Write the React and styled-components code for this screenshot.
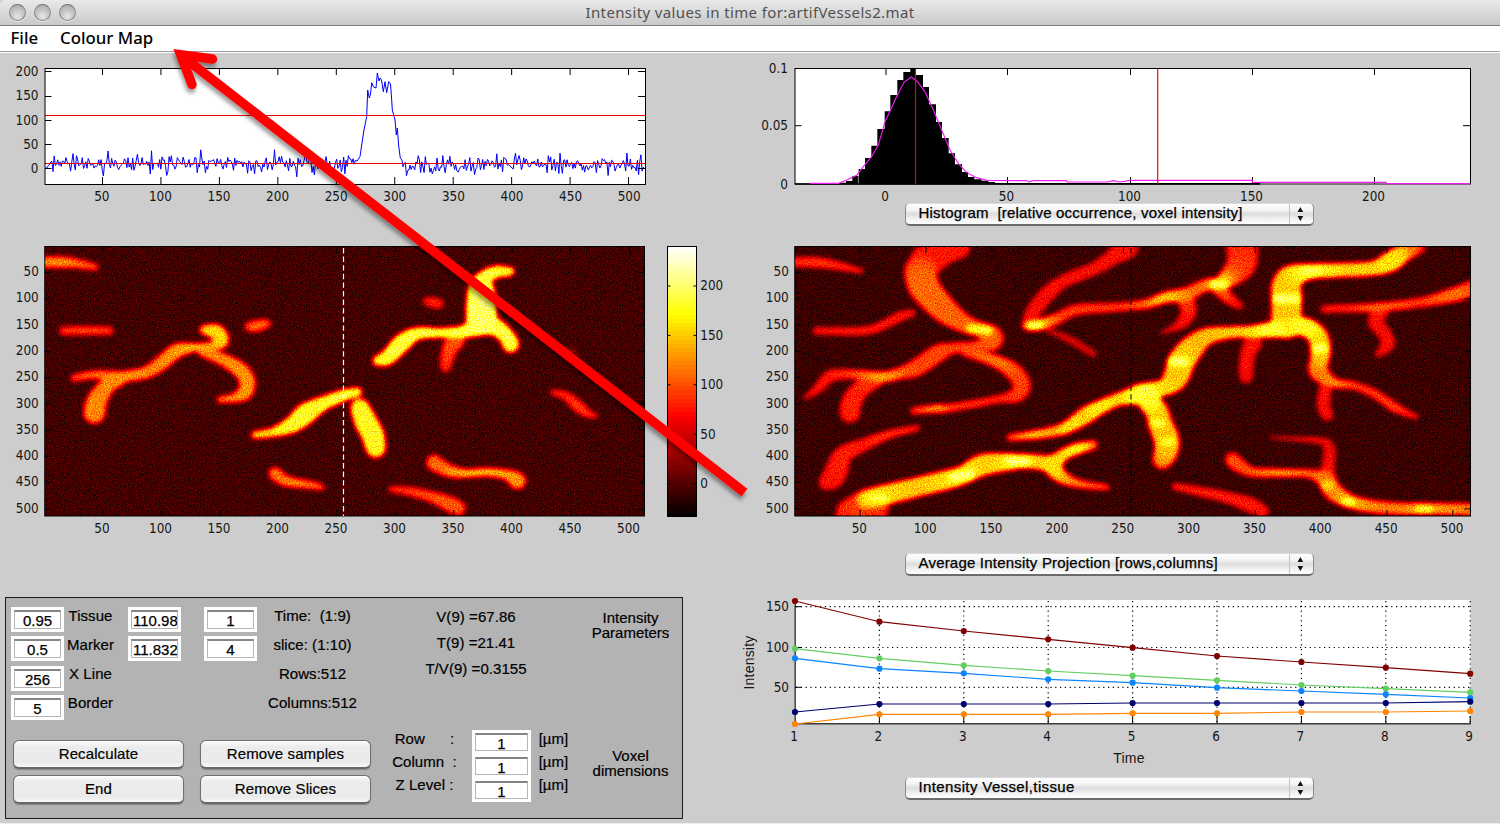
import React from 'react';
import styled, { createGlobalStyle } from 'styled-components';

const GlobalStyle = createGlobalStyle`
  * { box-sizing: border-box; }
  body { margin: 0; background: #cdcdcd; overflow: hidden; }
`;

const UI_FONT = '"Liberation Sans", Arial, sans-serif';
const MAC_FONT = '"Noto Sans", "Open Sans", sans-serif';

/* ---------- window chrome ---------- */

const Window = styled.div`
  position: relative;
  display: flex;
  flex-direction: column;
  width: 1500px;
  height: 824px;
  background: #cdcdcd;
  border-bottom: 1px solid #ececec;
  font-family: ${UI_FONT};
  color: #000;
  overflow: hidden;
`;

const TitleBar = styled.header`
  display: grid;
  grid-template-columns: 1fr auto 1fr;
  align-items: center;
  height: 26px;
  background: linear-gradient(#e9e9e9, #c9c9c9);
  border-bottom: 1px solid #7d7d7d;
  border-radius: 5px 0 0 0;
`;

const Lights = styled.div`
  display: flex;
  gap: 8px;
  padding-left: 9px;
`;

const Light = styled.span`
  width: 17px;
  height: 17px;
  border-radius: 50%;
  border: 1px solid #8b8b8b;
  border-top-color: #747474;
  background: radial-gradient(circle at 50% 75%, #e6e6e6 0, #c6c6c6 45%, #a2a2a2 100%);
  box-shadow: 0 1px 0 rgba(255, 255, 255, 0.6);
`;

const Title = styled.h1`
  margin: 0;
  font: 400 15px ${MAC_FONT};
  line-height: 25px;
  letter-spacing: 0.37px;
  color: #505050;
  white-space: pre;
`;

const MenuBar = styled.nav`
  display: flex;
  gap: 22px;
  align-items: center;
  height: 27px;
  padding: 0 0 3px 10.5px;
  background: #fff;
  border-bottom: 1px solid #fff;
  box-shadow: inset 0 -1px 0 #9c9c9c;
`;

const MenuItem = styled.span`
  font: 500 16.8px ${MAC_FONT};
  line-height: 23px;
  white-space: nowrap;
`;

const Body = styled.main`
  display: grid;
  grid-template-columns: 750px 750px;
`;

const Column = styled.section`
  display: flex;
  flex-direction: column;
  align-items: flex-start;
`;

const Plot = styled.svg`
  display: block;
  flex: none;
  overflow: visible;
`;

const Tick = styled.text`
  font: 400 13.4px "DejaVu Sans Condensed", "DejaVu Sans", sans-serif;
  font-stretch: condensed;
  fill: #151515;
`;

const AxisTitle = styled.text`
  font: 400 14px ${UI_FONT};
  letter-spacing: 0.2px;
  fill: #151515;
  text-anchor: middle;
`;

/* ---------- pop-up menus ---------- */

const Popup = styled.div`
  display: grid;
  grid-template-columns: 1fr 24px;
  align-items: center;
  width: 409px;
  height: 23px;
  margin-left: 155px;
  flex: none;
  padding-left: 12.5px;
  border: 1px solid #8c8c8c;
  border-top-color: #d9d9d9;
  border-bottom: 2px solid #6b6b6b;
  border-radius: 5px;
  background: linear-gradient(#fff 0, #f4f4f4 30%, #dcdcdc 50%, #f1f1f1 75%, #fff 100%);
`;

const PopupText = styled.span`
  padding-bottom: 2px;
  font-size: 15px;
  line-height: 18px;
  letter-spacing: ${(p) => p.$track || 0.2}px;
  -webkit-text-stroke: 0.25px #000;
  white-space: pre;
`;

const PopupArrows = styled.svg`
  height: 20px;
  width: 24px;
  border-left: 1px solid #c4c4c4;
`;

function PopupMenu({ children, track }) {
  return (
    <Popup>
      <PopupText $track={track}>{children}</PopupText>
      <PopupArrows viewBox="0 0 24 20">
        <path d="M7.8 8 10.8 2.6 13.8 8zM7.8 12 10.8 17.4 13.8 12z" fill="#111" />
      </PopupArrows>
    </Popup>
  );
}

/* ---------- parameter panel ---------- */

const Panel = styled.div`
  display: flex;
  flex-direction: column;
  width: 678px;
  height: 222px;
  margin-left: 5px;
  background: #b3b3b3;
  border: 1px solid #1a1a1a;
  font-size: 15px;
`;

const PanelRow = styled.div`
  display: flex;
  align-items: flex-start;
  height: ${(p) => p.$h}px;
`;

const Stack = styled.div`
  display: flex;
  flex-direction: column;
  flex: none;
  align-items: center;
  width: ${(p) => p.$w}px;
  padding-top: ${(p) => p.$top || 0}px;
  margin-left: ${(p) => p.$left || 0}px;
  gap: ${(p) => p.$gap || 0}px;
`;

const Field = styled.div`
  width: ${(p) => p.$w || 53}px;
  height: ${(p) => p.$h || 25}px;
  padding: 3px;
  background: #fff;
`;

const FieldInner = styled.div`
  height: 100%;
  overflow: hidden;
  border: 1px solid #b5b5b5;
  border-top: 2px solid #858585;
  text-align: ${(p) => (p.$clip ? 'left' : 'center')};
  padding: 0 0 0 ${(p) => (p.$clip ? 1 : 0)}px;
  font-size: 15px;
  line-height: 17px;
  white-space: nowrap;
  -webkit-text-stroke: 0.25px #000;
`;

const Label = styled.span`
  height: ${(p) => p.$h || 29.1}px;
  line-height: 17px;
  letter-spacing: 0.05px;
  white-space: pre;
  -webkit-text-stroke: 0.2px #000;
`;

const Heading = styled.div`
  text-align: center;
  line-height: 15px;
  white-space: pre;
  -webkit-text-stroke: 0.2px #000;
`;

const Button = styled.button`
  width: 171px;
  height: 29px;
  padding: 0 0 2px;
  border: 1px solid #6f6f6f;
  border-bottom: 2px solid #686868;
  border-radius: 6px;
  background: linear-gradient(#fdfdfd 0, #ececec 22%, #eaeaea 80%, #f8f8f8 100%);
  box-shadow: 0 1px 1px rgba(0, 0, 0, 0.25);
  font: 400 15px ${UI_FONT};
  letter-spacing: 0.1px;
  -webkit-text-stroke: 0.2px #000;
  color: #000;
`;

const Overlay = styled.svg`
  position: absolute;
  inset: 0;
  pointer-events: none;
`;

function Entry({ children, clip, w, h }) {
  return (
    <Field $w={w} $h={h}>
      <FieldInner $clip={clip}>{children}</FieldInner>
    </Field>
  );
}

/* ---------- data ---------- */

function seeded(seed) {
  let s = seed;
  return () => {
    s = (s * 1664525 + 1013904223) % 4294967296;
    return s / 4294967296;
  };
}

const PEAK = [
  [357, 161], [360, 156.7], [361.5, 146], [364, 130], [366.7, 116.7], [367.7, 90], [369.3, 98], [370.5, 94],
  [371.7, 82.7], [373.5, 87], [376, 88], [377.3, 73], [379, 81], [380, 78], [381.5, 80], [383.3, 91.7],
  [385, 81.7], [386.7, 92.7], [388.7, 81.7], [390.5, 84], [391.5, 97], [392.3, 110], [395, 120], [396.3, 135],
  [397.3, 128], [398.7, 146], [400.3, 158], [402, 160],
];

const SIGNAL = (() => {
  const rnd = seeded(77);
  const pts = [];
  const noise = (from, to) => {
    for (let x = from; x < to; x += 1.172) {
      const g = (rnd() + rnd() + rnd() + rnd() - 2) / 0.58;
      pts.push([x, Math.min(183, 164.5 - g * 4.8)]);
    }
  };
  noise(46, 356);
  pts.push(...PEAK);
  noise(403, 645);
  return pts.map(([x, y]) => `${x.toFixed(1)},${y.toFixed(1)}`).join(' ');
})();

/* left edge and top of each histogram bar, in thirds of a pixel */
const BARS = [
  [240, 398], [258, 393], [277, 378], [296, 357], [315, 324], [334, 287], [352, 237], [374, 184], [391, 135],
  [412, 90], [430, 66], [451, 56], [467, 75], [489, 111], [507, 163], [528, 216], [546, 264], [566, 310],
  [585, 343], [606, 366], [624, 381], [643, 388], [665, 392], [685, 396], [705, 399],
];
const HIST_PATH =
  'M105 404V400H240' + BARS.map(([x, y]) => `H${x}V${y}`).join('') + 'H1500V404Z';
const FIT = [
  [150, 400], [235, 400], [260, 390], [290, 376], [310, 350], [335, 320], [355, 285], [375, 215], [410, 140],
  [432, 97], [454, 81], [470, 93], [495, 125], [520, 180], [545, 240], [570, 300], [595, 340], [620, 368],
  [650, 383], [680, 391], [800, 392], [805, 396], [820, 392], [920, 392], [922, 396], [1040, 396], [1060, 392],
  [1080, 396], [1110, 391], [1477, 391], [1477, 397], [1878, 397], [1880, 401], [2130, 401],
].map((p) => p.join(',')).join(' ');

const SERIES = [
  { color: '#800000', y: [183, 245, 273, 298, 323, 348, 366, 383, 401] },
  { color: '#62cf62', y: [326, 355, 376, 393, 407, 421, 435, 446, 457] },
  { color: '#0a84ff', y: [355, 386, 400, 418, 428, 443, 453, 463, 474] },
  { color: '#00006e', y: [516, 492, 492, 492, 489, 489, 489, 489, 485] },
  { color: '#ff8400', y: [552, 523, 523, 523, 520, 520, 516, 516, 513] },
];

/* vessel centre lines: x, y, diameter (thirds of a pixel) and level */
const SLICE_VESSELS = [
  [[125, 82, 32, 0.58], [180, 82, 34, 0.6], [230, 86, 28, 0.55], [285, 97, 20, 0.48]],
  [[190, 288, 24, 0.48], [260, 287, 26, 0.5], [328, 288, 24, 0.46]],
  [[748, 276, 26, 0.48], [772, 273, 36, 0.56], [800, 266, 24, 0.46]],
  [[222, 430, 20, 0.5], [280, 420, 24, 0.56], [370, 424, 32, 0.62], [440, 412, 36, 0.6], [490, 380, 44, 0.6],
    [530, 348, 44, 0.62], [580, 338, 24, 0.68], [635, 333, 24, 0.62], [664, 318, 46, 0.66], [650, 292, 46, 0.74],
    [612, 285, 26, 0.6]],
  [[370, 428, 34, 0.62], [320, 455, 48, 0.6], [290, 500, 62, 0.6], [283, 534, 66, 0.6]],
  [[605, 350, 26, 0.6], [670, 375, 38, 0.6], [720, 405, 46, 0.62], [742, 440, 48, 0.62], [735, 472, 46, 0.62],
    [705, 488, 26, 0.6], [662, 494, 20, 0.55]],
  [[765, 600, 22, 0.68], [820, 592, 26, 0.76], [880, 567, 50, 0.8], [915, 538, 64, 0.8], [965, 508, 42, 0.8],
    [1030, 482, 34, 0.84], [1072, 472, 28, 0.78]],
  [[1080, 520, 56, 0.78], [1097, 560, 68, 0.8], [1118, 600, 68, 0.8], [1127, 638, 60, 0.76]],
  [[825, 716, 40, 0.57], [850, 735, 34, 0.56], [880, 743, 28, 0.6], [930, 750, 24, 0.56], [965, 757, 16, 0.5]],
  [[1132, 378, 26, 0.78], [1165, 366, 46, 0.82], [1205, 325, 54, 0.83], [1250, 297, 36, 0.84],
    [1320, 294, 28, 0.84], [1390, 290, 34, 0.86], [1440, 272, 62, 0.86], [1485, 276, 52, 0.84],
    [1520, 305, 46, 0.83], [1532, 328, 52, 0.79]],
  [[1530, 110, 26, 0.78], [1485, 112, 38, 0.82], [1448, 135, 44, 0.84], [1443, 170, 80, 0.83],
    [1443, 200, 86, 0.85], [1445, 250, 94, 0.87]],
  [[1368, 315, 56, 0.52], [1350, 340, 46, 0.5], [1340, 375, 38, 0.46], [1337, 394, 34, 0.44]],
  [[1280, 200, 20, 0.4], [1300, 203, 32, 0.46], [1316, 206, 28, 0.43]],
  [[1658, 472, 14, 0.44], [1700, 485, 26, 0.46], [1735, 515, 36, 0.48], [1765, 537, 22, 0.46], [1787, 543, 12, 0.44]],
  [[1302, 683, 48, 0.56], [1340, 705, 38, 0.56], [1390, 715, 26, 0.66], [1460, 712, 24, 0.68],
    [1520, 720, 30, 0.62], [1553, 738, 52, 0.62]],
  [[1173, 763, 16, 0.46], [1230, 770, 26, 0.49], [1300, 788, 34, 0.51], [1350, 808, 46, 0.53], [1373, 820, 46, 0.52]],
  [[1705, 345, 14, 0.26], [1725, 352, 14, 0.26]],
];

const PROJECTION_VESSELS = [
  [[125, 82, 28, 0.48], [200, 83, 32, 0.51], [260, 92, 26, 0.49], [333, 109, 14, 0.46]],
  [[635, 42, 48, 0.46], [580, 50, 80, 0.46], [528, 80, 100, 0.46]],
  [[512, 110, 100, 0.5], [522, 155, 92, 0.59], [580, 222, 78, 0.58], [640, 264, 54, 0.58], [692, 285, 44, 0.58]],
  [[660, 280, 22, 0.86], [715, 287, 26, 0.87]],
  [[692, 285, 46, 0.6], [728, 302, 58, 0.56], [728, 322, 50, 0.56], [680, 333, 28, 0.55], [600, 342, 34, 0.53],
    [560, 358, 54, 0.54], [500, 398, 52, 0.53], [450, 415, 34, 0.56], [400, 426, 32, 0.68], [300, 418, 28, 0.5],
    [240, 424, 36, 0.46], [205, 460, 28, 0.46], [165, 489, 10, 0.38]],
  [[385, 432, 40, 0.52], [335, 460, 52, 0.48], [305, 500, 60, 0.48], [300, 533, 62, 0.47]],
  [[198, 288, 22, 0.45], [340, 288, 26, 0.47], [400, 270, 26, 0.47], [450, 245, 30, 0.46], [485, 235, 22, 0.45]],
  [[645, 352, 24, 0.52], [730, 376, 36, 0.61], [790, 410, 50, 0.53], [815, 450, 54, 0.53], [800, 480, 42, 0.5],
    [740, 494, 22, 0.5], [600, 519, 24, 0.52], [560, 521, 26, 0.64], [490, 528, 20, 0.47]],
  [[500, 580, 18, 0.46], [420, 598, 24, 0.51], [340, 630, 38, 0.46], [280, 660, 52, 0.48], [262, 700, 68, 0.46],
    [250, 726, 68, 0.45], [225, 745, 32, 0.44]],
  [[300, 836, 86, 0.47], [345, 806, 80, 0.52], [375, 800, 80, 0.5], [385, 834, 50, 0.45]],
  [[345, 795, 50, 0.72], [390, 784, 62, 0.76], [500, 757, 58, 0.72], [590, 735, 58, 0.76], [640, 720, 54, 0.8],
    [700, 690, 66, 0.71], [800, 680, 46, 0.8], [850, 680, 42, 0.74], [905, 685, 50, 0.76], [940, 660, 34, 0.74],
    [980, 642, 34, 0.82], [1030, 630, 26, 0.54]],
  [[610, 728, 26, 0.94], [660, 718, 26, 0.94]],
  [[775, 678, 24, 0.94], [830, 680, 24, 0.92]],
  [[360, 788, 24, 0.85], [400, 790, 30, 0.88]],
  [[905, 690, 58, 0.78], [930, 722, 40, 0.68], [980, 745, 26, 0.6], [1070, 758, 16, 0.54]],
  [[780, 608, 20, 0.5], [850, 600, 26, 0.72], [920, 588, 32, 0.66], [960, 572, 38, 0.78], [1010, 540, 52, 0.7],
    [1045, 520, 42, 0.8], [1100, 495, 38, 0.72], [1140, 485, 46, 0.78], [1180, 478, 66, 0.87], [1200, 490, 66, 0.82]],
  [[1195, 500, 62, 0.8], [1220, 530, 68, 0.7], [1230, 565, 72, 0.72], [1250, 615, 76, 0.73], [1248, 650, 70, 0.66],
    [1236, 674, 56, 0.52]],
  [[1213, 565, 20, 0.9], [1236, 565, 20, 0.9]],
  [[1240, 620, 18, 0.87], [1268, 620, 18, 0.87]],
  [[1190, 470, 52, 0.82], [1250, 455, 48, 0.74], [1278, 425, 76, 0.71], [1295, 380, 82, 0.74], [1325, 340, 72, 0.7],
    [1370, 305, 50, 0.71], [1440, 293, 34, 0.74], [1510, 290, 36, 0.77], [1560, 285, 46, 0.87], [1610, 280, 54, 0.76],
    [1660, 275, 54, 0.84], [1700, 300, 60, 0.72], [1712, 340, 62, 0.74], [1708, 380, 56, 0.64], [1705, 408, 58, 0.58],
    [1750, 443, 28, 0.64], [1810, 452, 24, 0.51], [1870, 475, 26, 0.52], [1930, 515, 30, 0.52], [1970, 535, 20, 0.48],
    [2000, 546, 12, 0.46]],
  [[1265, 380, 28, 0.91], [1305, 380, 28, 0.92]],
  [[1700, 340, 30, 0.9], [1718, 340, 30, 0.9]],
  [[1608, 265, 92, 0.74], [1610, 225, 90, 0.71], [1610, 190, 92, 0.74], [1610, 150, 88, 0.7], [1628, 125, 68, 0.73],
    [1680, 110, 44, 0.84], [1770, 106, 42, 0.75], [1870, 100, 42, 0.75], [1925, 78, 62, 0.78], [1965, 52, 52, 0.6],
    [2012, 40, 24, 0.45]],
  [[1580, 192, 26, 0.93], [1640, 192, 26, 0.93]],
  [[1665, 110, 22, 0.9], [1705, 108, 22, 0.9]],
  [[1510, 325, 54, 0.45], [1495, 350, 44, 0.45], [1488, 400, 44, 0.44], [1488, 426, 38, 0.43]],
  [[1727, 455, 38, 0.45], [1720, 510, 40, 0.44], [1732, 540, 36, 0.42]],
  [[1475, 30, 96, 0.44], [1475, 85, 88, 0.49], [1440, 125, 60, 0.54], [1410, 145, 38, 0.76], [1365, 152, 36, 0.57],
    [1310, 178, 42, 0.6], [1245, 188, 32, 0.74], [1190, 207, 28, 0.58], [1110, 216, 26, 0.51], [980, 225, 32, 0.52],
    [920, 252, 34, 0.52], [865, 270, 34, 0.72], [832, 272, 30, 0.62]],
  [[1393, 148, 22, 0.92], [1425, 150, 22, 0.92]],
  [[842, 272, 20, 0.92], [870, 271, 20, 0.92]],
  [[1405, 160, 44, 0.56], [1440, 193, 32, 0.47], [1468, 213, 18, 0.45]],
  [[1305, 190, 50, 0.51], [1316, 225, 48, 0.45], [1303, 257, 38, 0.44], [1270, 280, 18, 0.42], [1235, 292, 8, 0.4]],
  [[1130, 40, 72, 0.44], [1100, 58, 50, 0.45], [1040, 98, 38, 0.45], [940, 140, 38, 0.45], [890, 180, 46, 0.44],
    [850, 230, 46, 0.44], [836, 268, 38, 0.44]],
  [[890, 285, 14, 0.34], [960, 315, 22, 0.39], [1030, 357, 20, 0.4]],
  [[1723, 222, 22, 0.46], [1810, 220, 24, 0.5], [1885, 217, 26, 0.59], [2010, 203, 28, 0.51], [2110, 180, 42, 0.6],
    [2170, 160, 50, 0.47]],
  [[1893, 230, 44, 0.46], [1875, 260, 44, 0.43], [1903, 295, 40, 0.44], [1913, 328, 42, 0.44], [1885, 358, 16, 0.4]],
  [[1560, 608, 6, 0.4], [1630, 612, 12, 0.44], [1720, 620, 20, 0.42], [1738, 642, 36, 0.41], [1735, 690, 38, 0.43],
    [1732, 730, 50, 0.46]],
  [[1447, 675, 44, 0.55], [1465, 690, 42, 0.55], [1510, 712, 28, 0.55], [1590, 714, 24, 0.67], [1680, 717, 24, 0.56],
    [1730, 738, 52, 0.61], [1748, 768, 56, 0.58], [1800, 800, 40, 0.7], [1870, 815, 38, 0.62], [1960, 822, 36, 0.62],
    [2020, 822, 36, 0.68], [2170, 824, 36, 0.6]],
  [[1725, 752, 30, 0.76], [1738, 752, 30, 0.76]],
  [[1785, 800, 20, 0.9], [1805, 801, 20, 0.9]],
  [[2005, 822, 18, 0.88], [2040, 822, 18, 0.86]],
  [[1275, 755, 20, 0.46], [1360, 772, 28, 0.48], [1440, 790, 34, 0.47], [1500, 810, 46, 0.46], [1538, 830, 36, 0.45]],
];

/* Catmull-Rom interpolation of each centre line into short strokes, dimmest first */
function toStrokes(vessels, dim) {
  const out = [];
  vessels.forEach((v) => {
    for (let i = 0; i < v.length - 1; i += 1) {
      const p0 = v[Math.max(0, i - 1)];
      const p1 = v[i];
      const p2 = v[i + 1];
      const p3 = v[Math.min(v.length - 1, i + 2)];
      const n = Math.max(2, Math.round(Math.hypot(p2[0] - p1[0], p2[1] - p1[1]) / 10));
      const at = (t) =>
        p1.map((_, k) => {
          if (k > 1) return p1[k] + (p2[k] - p1[k]) * t;
          return 0.5 * (2 * p1[k] + (p2[k] - p0[k]) * t + (2 * p0[k] - 5 * p1[k] + 4 * p2[k] - p3[k]) * t * t
            + (3 * p1[k] - p0[k] - 3 * p2[k] + p3[k]) * t * t * t);
        });
      for (let s = 0; s < n; s += 1) {
        const a = at(s / n);
        const b = at((s + 1) / n);
        out.push({ a, b, w: (a[2] + b[2]) / 2, level: (a[3] + b[3]) / 2 - dim });
      }
    }
  });
  return out.sort((m, n) => m.level - n.level);
}

const SLICE_STROKES = toStrokes(SLICE_VESSELS, 0.03);
const PROJECTION_STROKES = toStrokes(PROJECTION_VESSELS, 0.065);

const hot = (t) => {
  const c = (v) => Math.round(255 * Math.max(0, Math.min(1, v)));
  return `rgb(${c(t / 0.375)},${c((t - 0.375) / 0.375)},${c((t - 0.75) / 0.25)})`;
};

/* ---------- plots ---------- */

const range = (n) => Array.from({ length: n }, (_, i) => i);

function HeatMap({ id, x, width, strokes, base, seed }) {
  const w3 = width * 3;
  return (
    <svg x={x} y="246.5" width={width} height="269.5" viewBox={`134 35 ${w3} 808.5`}>
      <defs>
        <filter id={id} filterUnits="userSpaceOnUse" x="134" y="35" width={w3} height="809" colorInterpolationFilters="sRGB">
          <feGaussianBlur in="SourceGraphic" stdDeviation="7" result="soft" />
          <feTurbulence type="fractalNoise" baseFrequency="0.27" numOctaves="2" seed={seed} />
          <feColorMatrix values="1 0 0 0 0  1 0 0 0 0  1 0 0 0 0  0 0 0 0 1" result="grain" />
          <feComposite in="soft" in2="grain" operator="arithmetic" k1="0.24" k2="0.88" k3="0.26" k4="-0.13" />
          <feComponentTransfer>
            <feFuncR type="table" tableValues="0 .333 .667 1 1 1 1 1 1" />
            <feFuncG type="table" tableValues="0 0 0 0 .333 .667 1 1 1" />
            <feFuncB type="table" tableValues="0 0 0 0 0 0 0 .5 1" />
            <feFuncA type="linear" slope="0" intercept="1" />
          </feComponentTransfer>
        </filter>
      </defs>
      <g filter={`url(#${id})`}>
        <rect x="80" y="-20" width={w3 + 120} height="940" fill={`rgb(${base},${base},${base})`} />
        {strokes.map((s, i) => {
          const g = Math.round(s.level * 255);
          return (
            <line key={i} x1={s.a[0]} y1={s.a[1]} x2={s.b[0]} y2={s.b[1]}
              stroke={`rgb(${g},${g},${g})`} strokeWidth={s.w} strokeLinecap="round" />
          );
        })}
      </g>
    </svg>
  );
}

function MapAxes({ x0, x1, step }) {
  return (
    <g>
      <path stroke="#000" fill="none"
        d={range(10).map((i) => {
          const x = x0 - 0.5 + step * (i + 1);
          const y = 246.2 + 26.27 * (i + 1);
          return `M${x} 247v6M${x} 516v-6M${x0} ${y}h6M${x1} ${y}h-6`;
        }).join('')} />
      <rect x={x0} y="246.5" width={x1 - x0} height="269.5" fill="none" stroke="#000" />
      {range(10).map((i) => (
        <g key={i}>
          <Tick x={x0 - 1.3 + step * (i + 1)} y="532.5" textAnchor="middle">{50 * (i + 1)}</Tick>
          <Tick x={x0 - 6} y={276.2 + 26.27 * i} textAnchor="end">{50 * (i + 1)}</Tick>
        </g>
      ))}
    </g>
  );
}

function IntensityProfile() {
  return (
    <Plot width="750" height="173" viewBox="0 53 750 173">
      <rect x="45" y="68.5" width="600.5" height="116" fill="#fff" />
      <polyline points={SIGNAL} fill="none" stroke="#0000f5" strokeWidth="1" />
      <path d="M45 115.5H645M45 163.5H645" fill="none" stroke="#ee0000" strokeWidth="1.15" />
      <path stroke="#000" fill="none"
        d={range(10).map((i) => `M${102.5 + 58.45 * i} 69v6M${102.5 + 58.45 * i} 184v-7`).join('')
          + range(5).map((i) => `M45 ${Math.round(71.3 + 24.2 * i) + 0.5}h6.5M645 ${Math.round(71.3 + 24.2 * i) + 0.5}h-7`).join('')} />
      <rect x="45" y="68.5" width="600.5" height="116" fill="none" stroke="#000" />
      {range(5).map((i) => (
        <Tick key={i} x="38.5" y={76.2 + 24.2 * i} textAnchor="end">{200 - 50 * i}</Tick>
      ))}
      {range(10).map((i) => (
        <Tick key={i} x={101.8 + 58.6 * i} y="201.3" textAnchor="middle">{50 * (i + 1)}</Tick>
      ))}
    </Plot>
  );
}

function Histogram() {
  const xs = [886, 1007.5, 1130.5, 1252.5, 1374.5];
  return (
    <Plot width="750" height="150" viewBox="750 53 750 150">
      <rect x="795" y="68.5" width="675.5" height="116" fill="#fff" />
      <path stroke="#000" d={xs.map((x) => `M${x} 69v6M${x} 184v-7`).join('') + 'M795 125.7h6.5M1470 125.7h-7'} />
      <g transform="translate(760 50) scale(.33333)">
        <path d={HIST_PATH} fill="#000" />
        <path d="M295 374V400" stroke="#ddd" strokeWidth="2" />
      </g>
      <rect x="795" y="68.5" width="675.5" height="115.5" fill="none" stroke="#000" />
      <g transform="translate(760 50) scale(.33333)">
        <polyline points={FIT} fill="none" stroke="#f01cf0" strokeWidth="3.4" />
      </g>
      <path d="M915.5 69V184M1157.7 69V184" fill="none" stroke="#f80000" strokeWidth="1.15" />
      <Tick x="788" y="73.2" textAnchor="end">0.1</Tick>
      <Tick x="788" y="130.2" textAnchor="end">0.05</Tick>
      <Tick x="788" y="188.5" textAnchor="end">0</Tick>
      {xs.map((x, i) => (
        <Tick key={i} x={x - 1} y="201.3" textAnchor="middle">{i * 50}</Tick>
      ))}
    </Plot>
  );
}

function SliceMap() {
  return (
    <Plot width="750" height="371" viewBox="0 226 750 371">
      <HeatMap id="slice" x="44.7" width={600} strokes={SLICE_STROKES} base={25} seed={4} />
      <MapAxes x0={44.8} x1={644.5} step={58.5} />
      <path d="M343.5 248V516" stroke="#fff" strokeWidth="1.2" strokeDasharray="5.4 3.2" />
      <g shapeRendering="crispEdges">
        {range(64).map((i) => (
          <rect key={i} x="668" y={Math.round(247 + (i * 270) / 64)} width="29" height={i > 62 ? 4 : 5} fill={hot((63.5 - i) / 64)} />
        ))}
      </g>
      <rect x="667.5" y="246.5" width="29" height="270" fill="none" stroke="#000" />
      {range(5).map((i) => (
        <g key={i}>
          <path d={`M667.5 ${286 + 49.4 * i}h3M696.5 ${286 + 49.4 * i}h-3`} stroke="#000" />
          <Tick x="700.3" y={290.3 + 49.5 * i}>{200 - 50 * i}</Tick>
        </g>
      ))}
    </Plot>
  );
}

function ProjectionMap() {
  return (
    <Plot width="750" height="327" viewBox="750 226 750 327">
      <HeatMap id="projection" x="794.7" width={676} strokes={PROJECTION_STROKES} base={22} seed={9} />
      <MapAxes x0={794.8} x1={1470.5} step={65.85} />
      <path d="M1131 248V516" stroke="#000" strokeDasharray="5.4 3.2" />
    </Plot>
  );
}

function TimeSeries() {
  const px = (i) => 795 + 84.4 * i;
  const py = (v) => 540 + v / 3;
  return (
    <Plot width="750" height="201" viewBox="750 576 750 201">
      <rect x="795" y="600" width="675.5" height="124" fill="#fff" />
      <path d={range(8).map((i) => `M${px(i + 1)} 601V723`).join('') + 'M796 606.7H1470M796 647.5H1470M796 687.3H1470'}
        stroke="#000" strokeWidth="1.2" strokeDasharray="1.2 3.6" />
      <path d="M795.2 600V723.8H1471" fill="none" stroke="#3a3a3a" strokeWidth="1.4" />
      <path stroke="#000" d={range(8).map((i) => `M${px(i + 1)} 723v-7`).join('') + 'M795 606.7h6.5M795 647.5h6.5M795 687.3h6.5'} />
      {SERIES.map((s) => (
        <g key={s.color} fill={s.color}>
          <polyline points={s.y.map((v, i) => `${px(i)},${py(v)}`).join(' ')} fill="none" stroke={s.color} strokeWidth="1.1" />
          {s.y.map((v, i) => <circle key={i} cx={px(i)} cy={py(v)} r="3.1" />)}
        </g>
      ))}
      <Tick x="789" y="611" textAnchor="end">150</Tick>
      <Tick x="789" y="651.7" textAnchor="end">100</Tick>
      <Tick x="789" y="691.7" textAnchor="end">50</Tick>
      {range(9).map((i) => (
        <Tick key={i} x={px(i) - 1} y="740.5" textAnchor="middle">{i + 1}</Tick>
      ))}
      <AxisTitle x="1129" y="763">Time</AxisTitle>
      <AxisTitle transform="translate(754 662.5) rotate(-90)">Intensity</AxisTitle>
    </Plot>
  );
}

function ParameterPanel() {
  return (
    <Panel>
      <PanelRow $h={123}>
        <Stack $left={5} $w={53} $top={9} $gap={4.25}>
          <Entry>0.95</Entry>
          <Entry>0.5</Entry>
          <Entry>256</Entry>
          <Entry>5</Entry>
        </Stack>
        <Stack $w={53} $top={9}>
          <Label>Tissue</Label>
          <Label>Marker</Label>
          <Label>X Line</Label>
          <Label>Border</Label>
        </Stack>
        <Stack $left={11} $w={53} $top={9} $gap={4.25}>
          <Entry clip>110.985</Entry>
          <Entry clip>11.8324</Entry>
        </Stack>
        <Stack $left={23} $w={53} $top={9} $gap={4.25}>
          <Entry>1</Entry>
          <Entry>4</Entry>
        </Stack>
        <Stack $w={111} $top={9}>
          <Label>Time:  (1:9)</Label>
          <Label>slice: (1:10)</Label>
          <Label>Rows:512</Label>
          <Label>Columns:512</Label>
        </Stack>
        <Stack $left={47} $w={122} $top={10}>
          <Label $h={25.8}>V(9) =67.86</Label>
          <Label $h={25.8}>T(9) =21.41</Label>
          <Label $h={25.8}>T/V(9) =0.3155</Label>
        </Stack>
        <Stack $left={43.5} $w={100} $top={12}>
          <Heading>{'Intensity\nParameters'}</Heading>
        </Stack>
      </PanelRow>
      <PanelRow $h={97}>
        <Stack $left={7} $w={171} $top={19} $gap={6}>
          <Button>Recalculate</Button>
          <Button>End</Button>
        </Stack>
        <Stack $left={16} $w={171} $top={19} $gap={6}>
          <Button>Remove samples</Button>
          <Button>Remove Slices</Button>
        </Stack>
        <Stack $left={16} $w={75} $top={8.5}>
          <Label $h={23.4}>{'Row      :'}</Label>
          <Label $h={23.4}>{'Column  :'}</Label>
          <Label $h={23.4}>Z Level :</Label>
        </Stack>
        <Stack $left={10} $w={59} $top={9}>
          <Entry w={59} h={24}>1</Entry>
          <Entry w={59} h={24}>1</Entry>
          <Entry w={59} h={24}>1</Entry>
        </Stack>
        <Stack $left={6.5} $w={32} $top={8.5}>
          <Label $h={23.4}>[µm]</Label>
          <Label $h={23.4}>[µm]</Label>
          <Label $h={23.4}>[µm]</Label>
        </Stack>
        <Stack $left={11} $w={100} $top={27}>
          <Heading>{'Voxel\ndimensions'}</Heading>
        </Stack>
      </PanelRow>
    </Panel>
  );
}

export default function App() {
  return (
    <Window>
      <GlobalStyle />
      <TitleBar>
        <Lights>
          <Light />
          <Light />
          <Light />
        </Lights>
        <Title>Intensity values in time for:artifVessels2.mat</Title>
        <span />
      </TitleBar>
      <MenuBar>
        <MenuItem>File</MenuItem>
        <MenuItem>Colour Map</MenuItem>
      </MenuBar>
      <Body>
        <Column>
          <IntensityProfile />
          <SliceMap />
          <ParameterPanel />
        </Column>
        <Column>
          <Histogram />
          <PopupMenu>{'Histogram  [relative occurrence, voxel intensity]'}</PopupMenu>
          <ProjectionMap />
          <PopupMenu>Average Intensity Projection [rows,columns]</PopupMenu>
          <TimeSeries />
          <PopupMenu track={0.38}>Intensity Vessel,tissue</PopupMenu>
        </Column>
      </Body>
      <Overlay width="1500" height="824" viewBox="0 0 1500 824">
        <defs>
          <filter id="arrowShadow" x="-5%" y="-5%" width="110%" height="112%">
            <feDropShadow dx="-1" dy="4" stdDeviation="2" floodColor="#000" floodOpacity="0.4" />
          </filter>
        </defs>
        <g filter="url(#arrowShadow)" stroke="#ff0000" fill="none" strokeWidth="9.4">
          <path d="M744.5 492.5 182 56" />
          <path d="M212.5 59 180.6 54.7 192 84.5" strokeLinecap="round" strokeLinejoin="miter" />
        </g>
      </Overlay>
    </Window>
  );
}
